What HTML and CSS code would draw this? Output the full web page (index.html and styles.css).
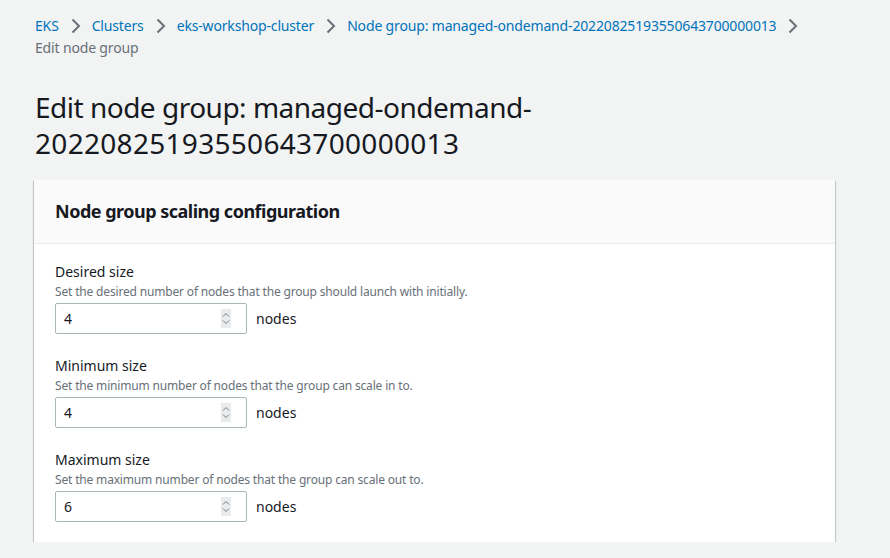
FILE: index.html
```html
<!DOCTYPE html>
<html lang="en">
<head>
<meta charset="utf-8">
<title>Edit node group</title>
<link rel="stylesheet" href="styles.css">
</head>
<body>
<div class="page">
  <nav class="crumbs">
    <a class="crumb-link" href="#">EKS</a>
    <svg class="chev" viewBox="0 0 16 16"><path d="M4.5 1.5l6.5 6.5-6.5 6.5"/></svg>
    <a class="crumb-link" href="#">Clusters</a>
    <svg class="chev" viewBox="0 0 16 16"><path d="M4.5 1.5l6.5 6.5-6.5 6.5"/></svg>
    <a class="crumb-link" href="#">eks-workshop-cluster</a>
    <svg class="chev" viewBox="0 0 16 16"><path d="M4.5 1.5l6.5 6.5-6.5 6.5"/></svg>
    <a class="crumb-link" href="#">Node group: managed-ondemand-20220825193550643700000013</a>
    <svg class="chev" viewBox="0 0 16 16"><path d="M4.5 1.5l6.5 6.5-6.5 6.5"/></svg>
    <span class="crumb-current">Edit node group</span>
  </nav>

  <h1 class="title"><span class="title-a">Edit node group: managed-ondemand-</span><br><span class="title-b">20220825193550643700000013</span></h1>

  <section class="panel">
    <div class="panel-head">
      <h2 class="panel-title">Node group scaling configuration</h2>
    </div>
    <div class="panel-body">
      <div class="field">
        <div class="label">Desired size</div>
        <div class="desc">Set the desired number of nodes that the group should launch with initially.</div>
        <div class="control">
          <div class="input"><span class="value">4</span><span class="spin"><svg viewBox="0 0 10 19"><path d="M2 7.5l3-3 3 3M2 11.5l3 3 3-3"/></svg></span></div>
          <span class="unit">nodes</span>
        </div>
      </div>
      <div class="field">
        <div class="label">Minimum size</div>
        <div class="desc">Set the minimum number of nodes that the group can scale in to.</div>
        <div class="control">
          <div class="input"><span class="value">4</span><span class="spin"><svg viewBox="0 0 10 19"><path d="M2 7.5l3-3 3 3M2 11.5l3 3 3-3"/></svg></span></div>
          <span class="unit">nodes</span>
        </div>
      </div>
      <div class="field">
        <div class="label">Maximum size</div>
        <div class="desc">Set the maximum number of nodes that the group can scale out to.</div>
        <div class="control">
          <div class="input"><span class="value">6</span><span class="spin"><svg viewBox="0 0 10 19"><path d="M2 7.5l3-3 3 3M2 11.5l3 3 3-3"/></svg></span></div>
          <span class="unit">nodes</span>
        </div>
      </div>
    </div>
  </section>
</div>
</body>
</html>
```

FILE: styles.css
```css
html, body {
  margin: 0;
  padding: 0;
  background: #f2f3f3;
}
body {
  font-family: "Noto Sans", "Open Sans", Arial, sans-serif;
  color: #16191f;
  font-size: 14px;
  line-height: 22px;
}
.page {
  padding: 15px 0 0 34px;
  width: 801px;
}
.crumbs {
  display: flex;
  flex-wrap: wrap;
  align-items: center;
  padding-left: 1px;
  font-size: 14px;
  line-height: 22px;
  letter-spacing: -0.16px;
}
.crumb-link {
  color: #0073bb;
  text-decoration: none;
}
.crumb-current {
  color: #687078;
}
.chev {
  width: 16px;
  height: 16px;
  margin: 0 8px 0 9px;
  fill: none;
  stroke: #687078;
  stroke-width: 2;
}
.title {
  margin: 30px 0 0 1px;
  font-size: 28px;
  line-height: 36px;
  font-weight: 400;
  color: #16191f;
}
.title-a {
  letter-spacing: -0.5px;
}
.title-b {
  letter-spacing: 0.3px;
}
.panel {
  margin-top: 19px;
  background: #fff;
  box-shadow: 0 1px 1px 0 rgba(0, 28, 36, 0.3), 1px 1px 1px 0 rgba(0, 28, 36, 0.15), -1px 1px 1px 0 rgba(0, 28, 36, 0.15);
}
.panel-head {
  background: #fafafa;
  border-bottom: 1px solid #eaeded;
  padding: 20px 21px;
}
.panel-title {
  margin: 0;
  font-size: 18px;
  line-height: 23px;
  font-weight: 700;
  letter-spacing: -0.5px;
}
.panel-body {
  padding: 16px 21px 20px;
  display: flex;
  flex-direction: column;
  gap: 20px;
}
.label {
  font-size: 14px;
  line-height: 23px;
}
.desc {
  font-size: 12px;
  line-height: 18px;
  color: #687078;
  letter-spacing: -0.17px;
}
.control {
  display: flex;
  align-items: center;
  gap: 9px;
  margin-top: 2px;
}
.input {
  box-sizing: border-box;
  width: 192px;
  height: 31px;
  border: 1px solid #aab7b8;
  border-radius: 2px;
  background: #fff;
  display: flex;
  align-items: center;
  justify-content: space-between;
  padding: 0 15px 0 8px;
}
.value {
  font-size: 14px;
  color: #16191f;
}
.spin {
  width: 10px;
  height: 19px;
  background: #e9ebec;
  display: flex;
}
.spin svg {
  width: 10px;
  height: 19px;
  fill: none;
  stroke: #737c80;
  stroke-width: 1;
}
.unit {
  font-size: 14px;
  color: #16191f;
}
```
